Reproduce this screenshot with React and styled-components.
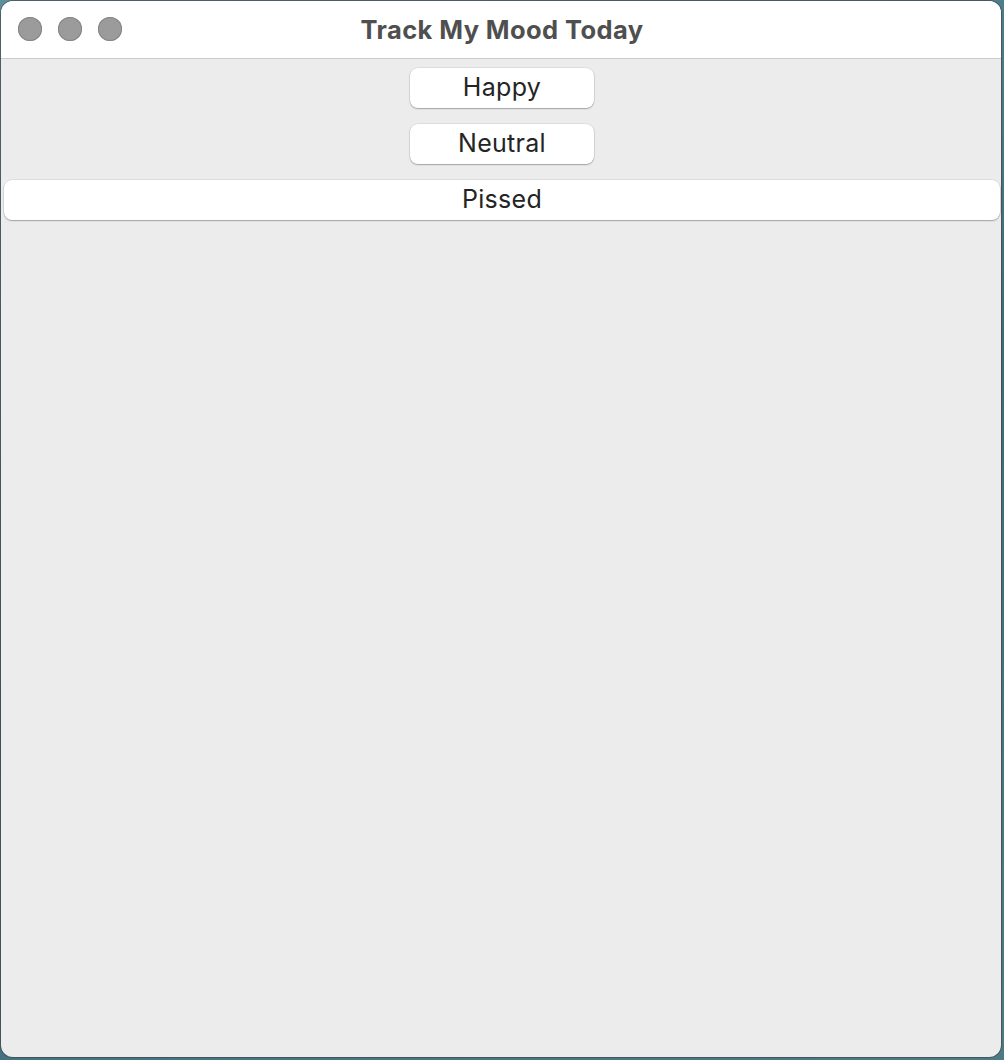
import React from "react";
import styled, { createGlobalStyle } from "styled-components";

const GlobalStyle = createGlobalStyle`
  html, body {
    margin: 0;
    padding: 0;
  }
  body {
    background: linear-gradient(160deg, #5f8f9c 0%, #3e6b7b 50%, #4d7a86 100%);
    font-family: Inter, "Noto Sans", sans-serif;
  }
`;

const Desktop = styled.div`
  width: 1004px;
  height: 1060px;
  padding: 1px 3px 3px 1px;
  box-sizing: border-box;
`;

const Window = styled.div`
  height: 100%;
  display: flex;
  flex-direction: column;
  border-radius: 12px;
  overflow: hidden;
  background: #ececec;
  box-shadow: 0 0 0 1px rgba(60, 60, 60, 0.55);
`;

const TitleBar = styled.div`
  position: relative;
  height: 57px;
  flex-shrink: 0;
  display: flex;
  align-items: center;
  justify-content: center;
  padding-left: 2px;
  background: #ffffff;
  border-bottom: 1px solid #cbcbcb;
`;

const Lights = styled.div`
  position: absolute;
  left: 17px;
  top: 16px;
  display: flex;
  gap: 16px;
`;

const Light = styled.span`
  width: 24px;
  height: 24px;
  border-radius: 50%;
  background: #9b9b9b;
  box-shadow: inset 0 0 0 1px #858585;
`;

const Title = styled.h1`
  margin: 0;
  font-size: 25.5px;
  font-weight: 700;
  color: #4f4f4f;
  letter-spacing: 0.4px;
`;

const Content = styled.div`
  flex: 1;
  display: flex;
  flex-direction: column;
  align-items: center;
  gap: 16px;
  padding: 9px 1px 9px 3px;
`;

const MoodButton = styled.button`
  width: ${(p) => (p.$wide ? "100%" : "184px")};
  height: 40px;
  border: none;
  border-radius: 8px;
  background: #ffffff;
  box-shadow: 0 0 0 0.5px rgba(0, 0, 0, 0.12), 0 1px 1.5px rgba(0, 0, 0, 0.28);
  font-family: Inter, "Noto Sans", sans-serif;
  font-size: 25px;
  letter-spacing: 0.3px;
  color: #242424;
  padding: 0 0 2px;
  cursor: pointer;
`;

const moods = [
  { label: "Happy" },
  { label: "Neutral" },
  { label: "Pissed", wide: true },
];

export default function App() {
  return (
    <>
      <GlobalStyle />
      <Desktop>
        <Window>
          <TitleBar>
            <Lights>
              <Light />
              <Light />
              <Light />
            </Lights>
            <Title>Track My Mood Today</Title>
          </TitleBar>
          <Content>
            {moods.map((m) => (
              <MoodButton key={m.label} $wide={m.wide}>
                {m.label}
              </MoodButton>
            ))}
          </Content>
        </Window>
      </Desktop>
    </>
  );
}
